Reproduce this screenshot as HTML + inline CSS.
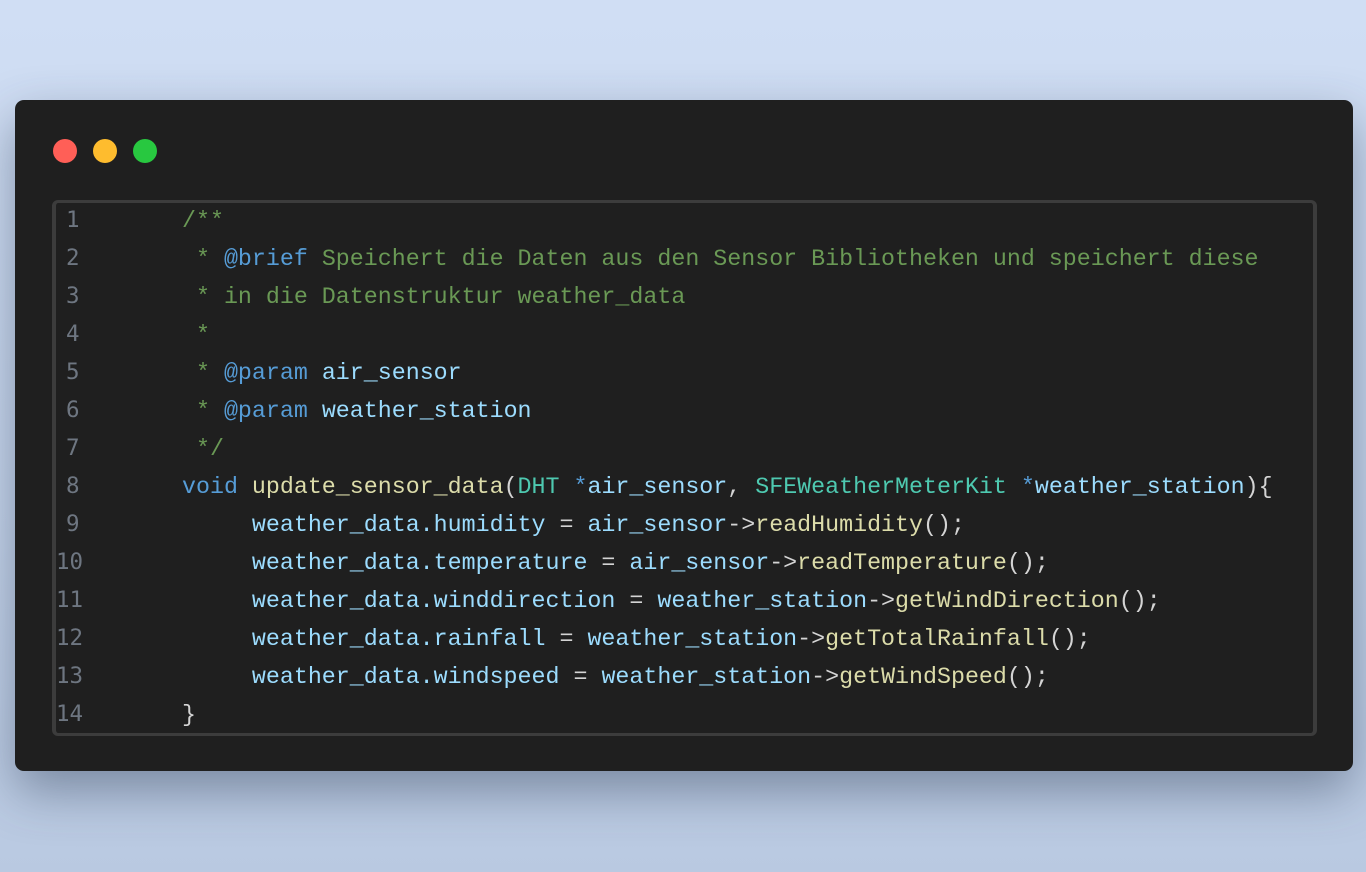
<!DOCTYPE html>
<html><head><meta charset="utf-8"><style>
html,body{margin:0;padding:0}
body{width:1366px;height:872px;background:linear-gradient(180deg,#d0def4 0%,#c6d5ec 60%,#b9c9e1 100%);position:relative;overflow:hidden;font-family:"Liberation Mono","DejaVu Sans Mono",monospace}
.win{position:absolute;left:15px;top:100px;width:1338px;height:671px;background:#1f1f1f;border-radius:9px;box-shadow:0 20px 50px rgba(40,55,80,.45)}
.dot{position:absolute;top:139px;width:24px;height:24px;border-radius:50%}
.box{position:absolute;left:52px;top:200px;width:1257px;height:530px;border:3px solid #3c3c3c;border-left-width:4px;border-right-width:4px;border-radius:6px}
.ln{position:absolute;left:66px;width:40px;font-family:"DejaVu Sans Mono",monospace;font-size:22.5px;color:#6e7681;line-height:38px;height:38px;margin-top:1px}
.cd{position:absolute;left:182px;font-size:23.3px;line-height:38px;height:38px;white-space:pre;color:#d4d4d4;margin-top:2px}
.c{color:#6a9955}.k{color:#569cd6}.v{color:#9cdcfe}.f{color:#dcdcaa}.t{color:#4ec9b0}
</style></head><body>
<div class="win"></div>
<div class="dot" style="left:53px;background:#ff5f57"></div>
<div class="dot" style="left:93px;background:#febc2e"></div>
<div class="dot" style="left:133px;background:#28c840"></div>
<div class="box"></div>
<div class="ln" style="top:200px">1</div>
<div class="ln" style="top:238px">2</div>
<div class="ln" style="top:276px">3</div>
<div class="ln" style="top:314px">4</div>
<div class="ln" style="top:352px">5</div>
<div class="ln" style="top:390px">6</div>
<div class="ln" style="top:428px">7</div>
<div class="ln" style="top:466px">8</div>
<div class="ln" style="top:504px">9</div>
<div class="ln" style="top:542px;left:56px">10</div>
<div class="ln" style="top:580px;left:56px">11</div>
<div class="ln" style="top:618px;left:56px">12</div>
<div class="ln" style="top:656px;left:56px">13</div>
<div class="ln" style="top:694px;left:56px">14</div>
<div class="cd c" style="top:200px">/**</div>
<div class="cd c" style="top:238px"> * <span class="k">@brief</span> Speichert die Daten aus den Sensor Bibliotheken und speichert diese</div>
<div class="cd c" style="top:276px"> * in die Datenstruktur weather_data</div>
<div class="cd c" style="top:314px"> *</div>
<div class="cd c" style="top:352px"> * <span class="k">@param</span> <span class="v">air_sensor</span></div>
<div class="cd c" style="top:390px"> * <span class="k">@param</span> <span class="v">weather_station</span></div>
<div class="cd c" style="top:428px"> */</div>
<div class="cd" style="top:466px"><span class="k">void</span> <span class="f">update_sensor_data</span>(<span class="t">DHT</span> <span class="k">*</span><span class="v">air_sensor</span>, <span class="t">SFEWeatherMeterKit</span> <span class="k">*</span><span class="v">weather_station</span>){</div>
<div class="cd" style="top:504px">     <span class="v">weather_data.humidity</span> = <span class="v">air_sensor</span>-&gt;<span class="f">readHumidity</span>();</div>
<div class="cd" style="top:542px">     <span class="v">weather_data.temperature</span> = <span class="v">air_sensor</span>-&gt;<span class="f">readTemperature</span>();</div>
<div class="cd" style="top:580px">     <span class="v">weather_data.winddirection</span> = <span class="v">weather_station</span>-&gt;<span class="f">getWindDirection</span>();</div>
<div class="cd" style="top:618px">     <span class="v">weather_data.rainfall</span> = <span class="v">weather_station</span>-&gt;<span class="f">getTotalRainfall</span>();</div>
<div class="cd" style="top:656px">     <span class="v">weather_data.windspeed</span> = <span class="v">weather_station</span>-&gt;<span class="f">getWindSpeed</span>();</div>
<div class="cd" style="top:694px">}</div>
</body></html>
